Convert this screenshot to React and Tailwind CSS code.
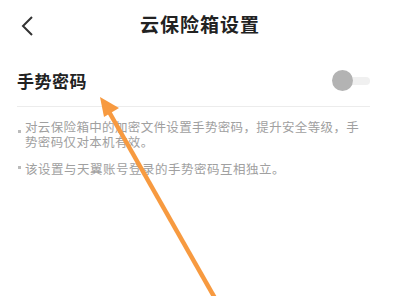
export default function App() {
  return (
    <div
      className="relative w-[400px] h-[296px] overflow-hidden bg-white text-[#222]"
      style={{ fontFamily: '"Noto Sans CJK SC", "Noto Sans", sans-serif' }}
    >
      <div className="relative flex items-center justify-center h-[44px] pt-[5px]">
        <svg
          className="absolute left-[20px] top-[15px]"
          width="16"
          height="22"
          viewBox="0 0 16 22"
          fill="none"
        >
          <path d="M12 2 L3 11 L12 20" stroke="#333" strokeWidth="2" />
        </svg>
        <div className="text-[19px] font-bold tracking-[1px]">云保险箱设置</div>
      </div>

      <div className="ml-[17px] mr-[30px] mt-[20px] flex items-center justify-between h-[33px] border-b border-[#ececec] pb-[9px] box-content">
        <div className="text-[17px] font-bold tracking-[0.5px]">手势密码</div>
        <div className="relative w-[38px] h-[22px]">
          <div className="absolute left-[12px] top-[7px] w-[26px] h-[8px] rounded-full bg-[#f0f0f0]" />
          <div className="absolute left-[0px] top-[0px] w-[21px] h-[21px] rounded-full bg-[#b3b3b3]" />
        </div>
      </div>

      <div className="ml-[18px] mt-[12px] flex flex-col gap-[12px] text-[12.5px] leading-[15px] text-[#a0a0a0]">
        <div className="flex gap-[4px]">
          <div className="w-[3px] h-[3px] bg-[#bbb] mt-[11px] shrink-0" />
          <div className="tracking-[0.35px] whitespace-nowrap">
            对云保险箱中的加密文件设置手势密码，提升安全等级，手
            <br />
            势密码仅对本机有效。
          </div>
        </div>
        <div className="flex gap-[4px]">
          <div className="w-[3px] h-[3px] bg-[#bbb] mt-[5px] shrink-0" />
          <div className="tracking-[0.5px] whitespace-nowrap">该设置与天翼账号登录的手势密码互相独立。</div>
        </div>
      </div>

      <svg className="absolute left-0 top-0" width="400" height="296" viewBox="0 0 400 296">
        <line x1="108" y1="110" x2="216" y2="300" stroke="#f79a40" strokeWidth="4.5" />
        <polygon points="100,97 119,108 104,117" fill="#f79a40" />
      </svg>
    </div>
  );
}
